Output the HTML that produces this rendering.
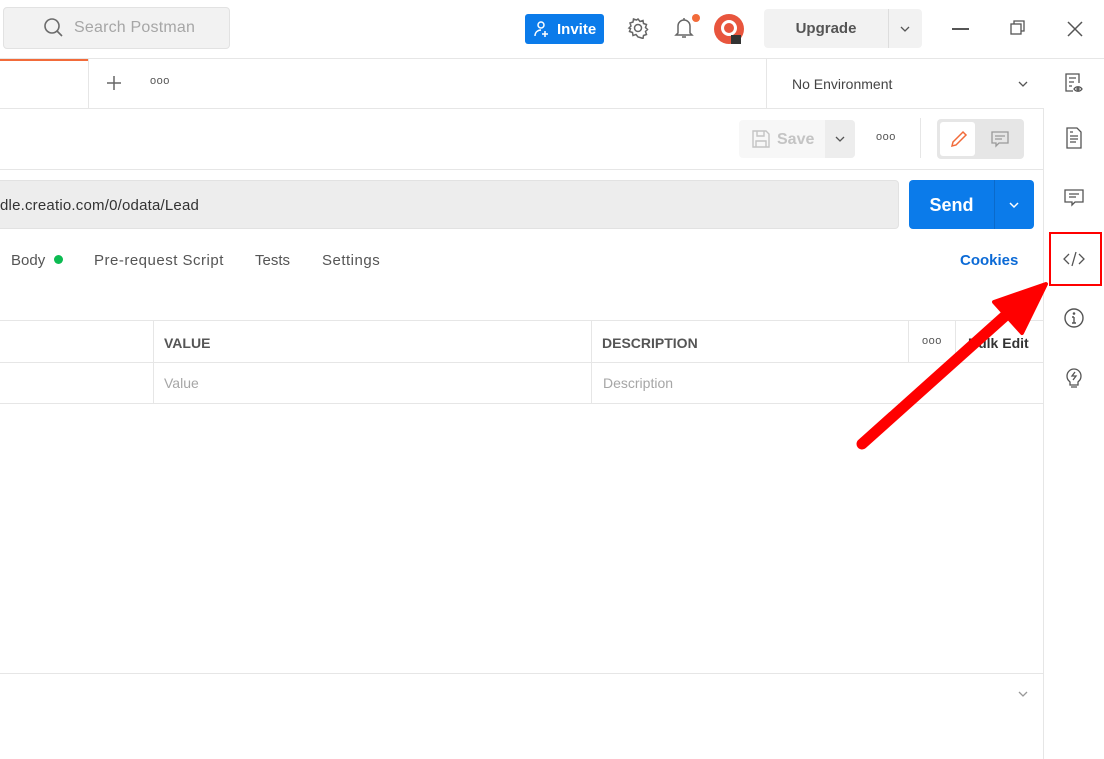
<!DOCTYPE html><html><head><style>
*{margin:0;padding:0;box-sizing:border-box}
body{width:1104px;height:759px;overflow:hidden;background:#fff;font-family:"Liberation Sans",sans-serif;position:relative;color:#212121}
.a{position:absolute}
.hl{position:absolute;height:1px;background:#e6e6e6}
.vl{position:absolute;width:1px;background:#e6e6e6}
.dots{font-size:11px;color:#555;letter-spacing:0.5px}
</style></head><body>
<div class="a" style="left:3px;top:7px;width:227px;height:42px;background:#f2f2f2;border:1px solid #e2e2e2;border-radius:4px"></div>
<svg class="a" style="left:43px;top:17px" width="22" height="22" viewBox="0 0 22 22" fill="none" stroke="#6b6b6b" stroke-width="1.6"><circle cx="9" cy="9" r="7"/><path d="M14 14l5 5"/></svg>
<div class="a" style="left:74px;top:19px;font-size:16px;color:#a6a6a6;letter-spacing:0.2px">Search Postman</div>
<div class="a" style="left:525px;top:14px;width:79px;height:30px;background:#0b7bea;border-radius:3px;color:#fff;font-weight:bold;font-size:15px;line-height:31px;padding-left:32px">Invite</div>
<svg class="a" style="left:533px;top:20px" width="18" height="18" viewBox="0 0 18 18" fill="none" stroke="#fff" stroke-width="1.5"><circle cx="8" cy="5" r="3"/><path d="M2 16c0-4 3-6 6-6M12 11v6M9 14h6"/></svg>
<svg class="a" style="left:627px;top:17px" width="22" height="22" viewBox="0 0 22 22" fill="none" stroke="#666" stroke-width="1.5"><circle cx="11" cy="11" r="3.5"/><path d="M11 2l2 2.5 3-1 .5 3 3 1-1 3 2 2-2 2 1 3-3 1-.5 3-3-1L11 20l-2-2.5-3 1-.5-3-3-1 1-3L2 11l2-2-1-3 3-1 .5-3 3 1z"/></svg>
<svg class="a" style="left:674px;top:16px" width="20" height="24" viewBox="0 0 20 24" fill="none" stroke="#666" stroke-width="1.5"><path d="M4 17V10a6 6 0 0112 0v7l2 2H2zM8 21h4M10 2v2"/></svg>
<div class="a" style="left:692px;top:14px;width:8px;height:8px;border-radius:50%;background:#f26b3a"></div>
<div class="a" style="left:714px;top:14px;width:30px;height:30px;border-radius:50%;background:#e8553d"></div>
<div class="a" style="left:721px;top:20px;width:16px;height:16px;border-radius:50%;border:3px solid #fff"></div>
<div class="a" style="left:731px;top:35px;width:10px;height:9px;background:#333"></div>
<div class="a" style="left:764px;top:9px;width:158px;height:39px;background:#f2f2f2;border-radius:4px"></div>
<div class="vl" style="left:888px;top:9px;height:39px;background:#ddd"></div>
<div class="a" style="left:764px;top:20px;width:124px;text-align:center;font-weight:bold;font-size:15px;color:#555">Upgrade</div>
<svg class="a" style="left:898px;top:22px" width="14" height="14" viewBox="0 0 14 14" fill="none" stroke="#555" stroke-width="1.3"><path d="M3 5l4 4 4-4"/></svg>
<div class="a" style="left:952px;top:28px;width:17px;height:1.5px;background:#555"></div>
<svg class="a" style="left:1009px;top:19px" width="18" height="18" viewBox="0 0 18 18" fill="none" stroke="#555" stroke-width="1.3"><rect x="2" y="5" width="10" height="10"/><path d="M5 5V2h10v10h-3"/></svg>
<svg class="a" style="left:1066px;top:20px" width="18" height="18" viewBox="0 0 18 18" fill="none" stroke="#555" stroke-width="1.5"><path d="M2 2l14 14M16 2L2 16"/></svg>
<div class="hl" style="left:0;top:58px;width:1104px"></div>
<div class="a" style="left:0;top:59px;width:88px;height:2px;background:#f26b3a"></div>
<div class="vl" style="left:88px;top:58px;height:50px"></div>
<div class="vl" style="left:766px;top:58px;height:50px"></div>
<svg class="a" style="left:106px;top:75px" width="16" height="16" viewBox="0 0 16 16" stroke="#666" stroke-width="1.5"><path d="M8 1v14M1 8h14"/></svg>
<div class="a dots" style="left:150px;top:75px">ooo</div>
<div class="a" style="left:792px;top:76px;font-size:14px;color:#444">No Environment</div>
<svg class="a" style="left:1016px;top:77px" width="14" height="14" viewBox="0 0 14 14" fill="none" stroke="#555" stroke-width="1.3"><path d="M3 5l4 4 4-4"/></svg>
<svg class="a" style="left:1063px;top:72px" width="22" height="22" viewBox="0 0 22 22" fill="none" stroke="#555" stroke-width="1.3"><path d="M10 19H3V2h13v9M6 6h7M6 10h5M6 14h3"/><path d="M11 17c2-3 6-3 8 0-2 3-6 3-8 0z"/><circle cx="15" cy="17" r="1"/></svg>
<div class="hl" style="left:0;top:108px;width:1043px"></div>
<div class="vl" style="left:1043px;top:108px;height:651px"></div>
<div class="a" style="left:739px;top:120px;width:116px;height:38px;background:#f7f7f7;border-radius:4px"></div>
<div class="a" style="left:825px;top:120px;width:30px;height:38px;background:#ededed;border-radius:0 4px 4px 0"></div>
<svg class="a" style="left:751px;top:129px" width="20" height="20" viewBox="0 0 20 20" fill="none" stroke="#c4c4c4" stroke-width="1.4"><path d="M2 2h13l3 3v13H2z M6 2v5h7V2 M5 18v-6h10v6"/></svg>
<div class="a" style="left:777px;top:131px;font-size:16px;font-weight:bold;color:#c4c4c4">Save</div>
<svg class="a" style="left:833px;top:132px" width="14" height="14" viewBox="0 0 14 14" fill="none" stroke="#555" stroke-width="1.3"><path d="M3 5l4 4 4-4"/></svg>
<div class="a dots" style="left:876px;top:131px">ooo</div>
<div class="vl" style="left:920px;top:118px;height:40px"></div>
<div class="a" style="left:937px;top:119px;width:87px;height:40px;background:#e6e6e6;border-radius:4px"></div>
<div class="a" style="left:940px;top:122px;width:35px;height:34px;background:#fff;border-radius:3px"></div>
<svg class="a" style="left:949px;top:129px" width="20" height="20" viewBox="0 0 20 20" fill="none" stroke="#f26b3a" stroke-width="1.5"><path d="M3 17l1-4L14 3l3 3L7 16z"/></svg>
<svg class="a" style="left:990px;top:129px" width="20" height="20" viewBox="0 0 20 20" fill="none" stroke="#999" stroke-width="1.3"><path d="M2 3h16v11H9l-3 3v-3H2z M5 7h10M5 10h7"/></svg>
<svg class="a" style="left:1064px;top:127px" width="20" height="22" viewBox="0 0 20 22" fill="none" stroke="#555" stroke-width="1.3"><path d="M3 1h10l4 4v16H3z M6 9h8M6 12h8M6 15h6M6 5h3"/></svg>
<div class="hl" style="left:0;top:169px;width:1043px"></div>
<div class="a" style="left:-5px;top:180px;width:904px;height:49px;background:#ededed;border:1px solid #e2e2e2;border-radius:4px"></div>
<div class="a" style="left:0;top:197px;font-size:15px;color:#333;letter-spacing:0.2px">dle.creatio.com/0/odata/Lead</div>
<div class="a" style="left:909px;top:180px;width:125px;height:49px;background:#0b7bea;border-radius:4px"></div>
<div class="vl" style="left:994px;top:180px;height:49px;background:#0a6acb"></div>
<div class="a" style="left:909px;top:195px;width:85px;text-align:center;color:#fff;font-weight:bold;font-size:18px">Send</div>
<svg class="a" style="left:1007px;top:198px" width="14" height="14" viewBox="0 0 14 14" fill="none" stroke="#fff" stroke-width="1.5"><path d="M3 5l4 4 4-4"/></svg>
<svg class="a" style="left:1063px;top:187px" width="22" height="22" viewBox="0 0 22 22" fill="none" stroke="#555" stroke-width="1.3"><path d="M2 3h18v12H12l-3 3v-3H2z M6 7h10M6 10h7"/></svg>
<div class="a" style="left:11px;top:252px;font-size:15px;color:#555">Body</div>
<div class="a" style="left:54px;top:255px;width:9px;height:9px;border-radius:50%;background:#0cbb52"></div>
<div class="a" style="left:94px;top:252px;font-size:15px;color:#555;letter-spacing:0.5px">Pre-request Script</div>
<div class="a" style="left:255px;top:252px;font-size:15px;color:#555">Tests</div>
<div class="a" style="left:322px;top:252px;font-size:15px;color:#555;letter-spacing:0.5px">Settings</div>
<div class="a" style="left:960px;top:252px;font-size:15px;font-weight:bold;color:#0b6ad6">Cookies</div>
<svg class="a" style="left:1062px;top:248px" width="24" height="22" viewBox="0 0 24 22" fill="none" stroke="#555" stroke-width="1.3"><path d="M7 6l-5 5 5 5M17 6l5 5-5 5M14 4l-4 14"/></svg>
<div class="a" style="left:1049px;top:232px;width:53px;height:54px;border:2px solid #f00"></div>
<svg class="a" style="left:1063px;top:307px" width="22" height="22" viewBox="0 0 22 22" fill="none" stroke="#555" stroke-width="1.4"><circle cx="11" cy="11" r="9"/><path d="M11 10v6M9 16h4M9 10h2"/><circle cx="11" cy="6.5" r=".6" fill="#555"/></svg>
<svg class="a" style="left:1062px;top:366px" width="24" height="24" viewBox="0 0 24 24" fill="none" stroke="#555" stroke-width="1.3"><path d="M8 16c-2-2-3-3-3-6a7 7 0 0114 0c0 3-1 4-3 6v3H8z M9 21h6M13 6l-3 4h4l-3 4"/></svg>
<div class="hl" style="left:0;top:320px;width:1043px"></div>
<div class="hl" style="left:0;top:362px;width:1043px"></div>
<div class="hl" style="left:0;top:403px;width:1043px"></div>
<div class="vl" style="left:153px;top:320px;height:83px"></div>
<div class="vl" style="left:591px;top:320px;height:83px"></div>
<div class="vl" style="left:908px;top:320px;height:42px"></div>
<div class="vl" style="left:955px;top:320px;height:42px"></div>
<div class="a" style="left:164px;top:335px;font-size:14px;font-weight:bold;color:#555">VALUE</div>
<div class="a" style="left:602px;top:335px;font-size:14px;font-weight:bold;color:#555">DESCRIPTION</div>
<div class="a dots" style="left:922px;top:335px">ooo</div>
<div class="a" style="left:968px;top:335px;font-size:14px;font-weight:bold;color:#333">Bulk Edit</div>
<div class="a" style="left:164px;top:375px;font-size:14px;color:#a6a6a6">Value</div>
<div class="a" style="left:603px;top:375px;font-size:14px;color:#a6a6a6">Description</div>
<div class="hl" style="left:0;top:673px;width:1043px"></div>
<svg class="a" style="left:1016px;top:687px" width="14" height="14" viewBox="0 0 14 14" fill="none" stroke="#999" stroke-width="1.3"><path d="M3 5l4 4 4-4"/></svg>
<svg class="a" style="left:0;top:0" width="1104" height="759"><path d="M862 444L1005 316" stroke="#f00" stroke-width="11" stroke-linecap="round"/><path d="M1046 284L994 302L1022 333z" fill="#f00" stroke="#f00" stroke-width="4" stroke-linejoin="round"/></svg>
</body></html>
